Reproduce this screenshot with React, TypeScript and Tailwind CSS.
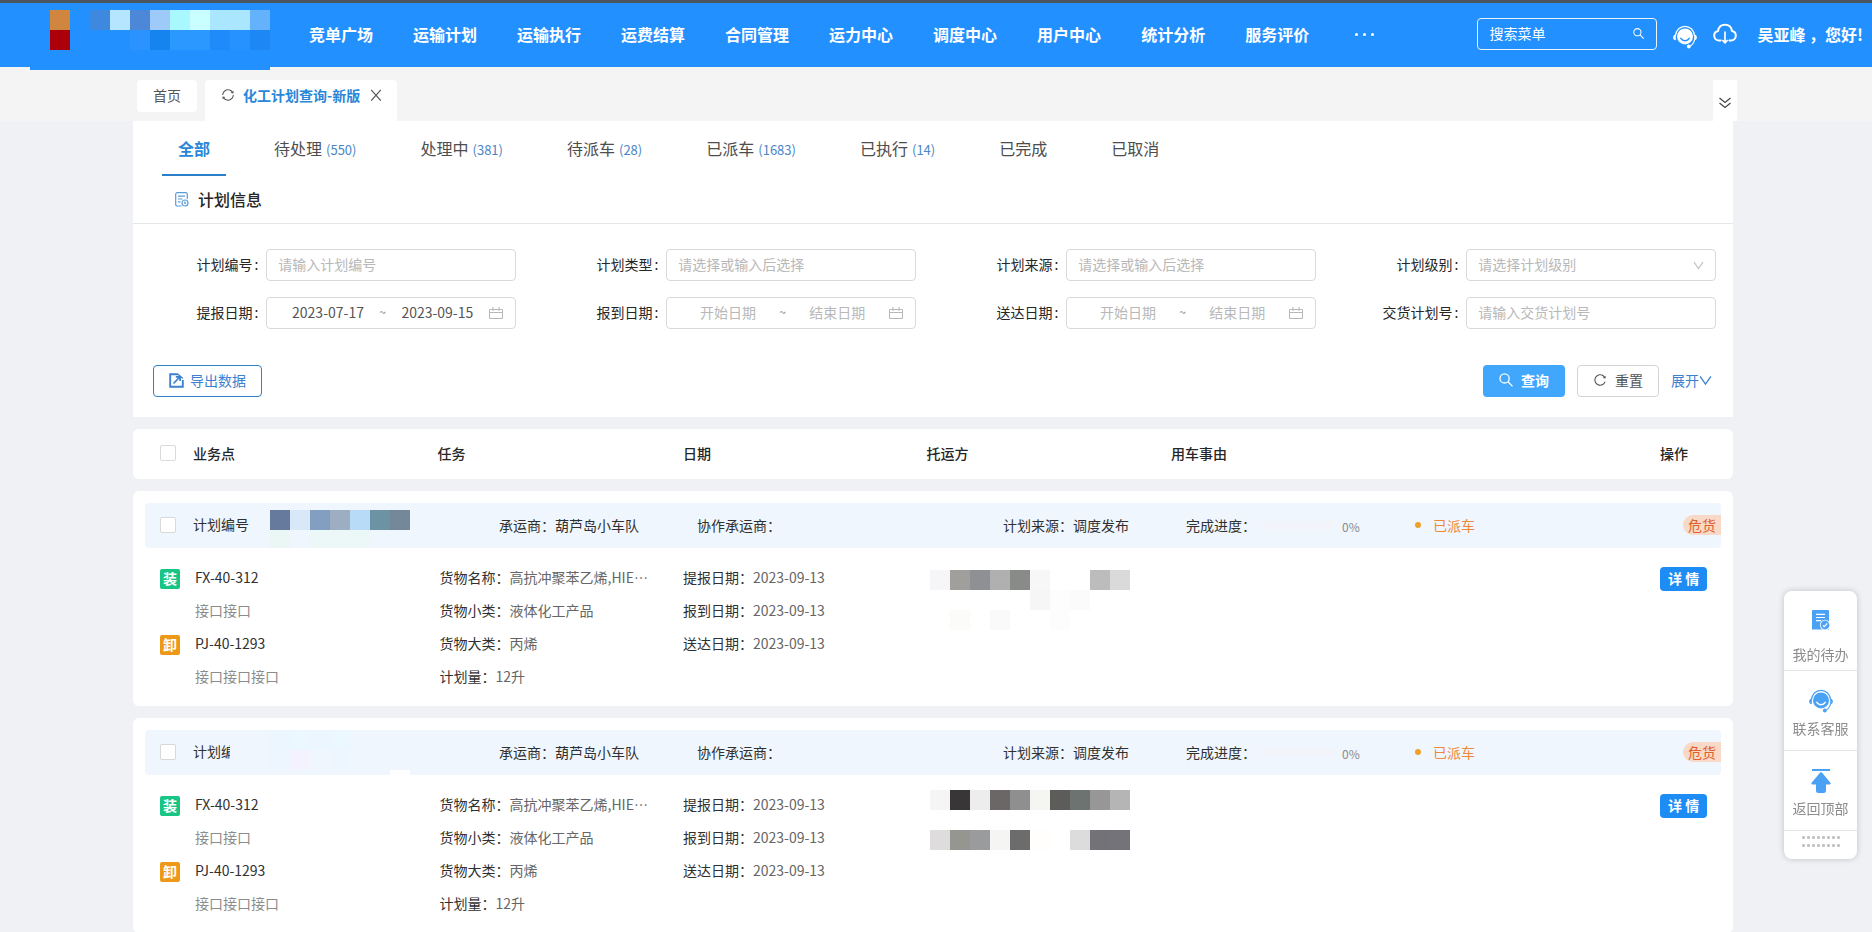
import React from "react";
import { AiOutlineReload, AiOutlineSync } from "react-icons/ai";

type Cell = [col: number, row: number, color: string];

const CELL = 20;

function Mosaic({ cells, width, height, className = "" }: { cells: Cell[]; width: number; height: number; className?: string }) {
  return (
    <svg
      width={width}
      height={height}
      viewBox={`0 0 ${width} ${height}`}
      shapeRendering="crispEdges"
      aria-hidden="true"
      className={`block shrink-0 ${className}`}
    >
      {cells.map(([col, row, color]) => (
        <rect key={`${col}-${row}`} x={col * CELL} y={row * CELL} width={CELL} height={CELL} fill={color} />
      ))}
    </svg>
  );
}

function HeadsetIcon({ size, smile }: { size: number; smile: string }) {
  return (
    <svg width={size} height={size} viewBox="0 0 24 24" fill="none" aria-hidden="true">
      <path d="M2.400 11C2.800 5.200 6.800 1.300 12 1.300s9.200 3.900 9.600 9.700" stroke="currentColor" strokeWidth="1.200" />
      <path d="M2.800 9.500v5.800C1.200 15.100.1 14 .1 12.400s1.100-2.700 2.700-2.900ZM21.200 9.500v5.800c1.600-.2 2.700-1.300 2.700-2.900s-1.100-2.700-2.700-2.900Z" fill="currentColor" />
      <circle cx="12" cy="11.400" r="8" fill="currentColor" />
      <path d="M7.800 13.400c2 3 6.400 3 8.400 0" stroke={smile} strokeWidth="1.500" strokeLinecap="round" />
      <path d="M21.600 14.500c-.6 3.400-2.600 5.800-5.400 7" stroke="currentColor" strokeWidth="1.200" />
      <circle cx="15.800" cy="21.500" r="1.900" fill="currentColor" />
    </svg>
  );
}

function CloudIcon() {
  return (
    <svg width="24" height="22" viewBox="0 0 24 22" fill="none" stroke="currentColor" strokeWidth="2" strokeLinecap="round" strokeLinejoin="round" aria-hidden="true">
      <path d="M7.600 17.500H5.800A4.800 4.800 0 0 1 1.200 12.800c0-2.600 1.700-4.300 3.800-4.700C5.600 4.300 8.400 1.800 12 1.800s6.400 2.500 7 6.300c2.100.4 3.800 2.100 3.800 4.700a4.800 4.800 0 0 1-4.600 4.700h-1.800" />
      <path d="M12 9v10.500M9.800 17.500l2.200 2.300 2.200-2.300" strokeWidth="1.700" />
    </svg>
  );
}

function SearchIcon({ size }: { size: number }) {
  return (
    <svg width={size} height={size} viewBox="0 0 14 14" fill="none" stroke="currentColor" strokeWidth="1.300" aria-hidden="true">
      <circle cx="5.600" cy="5.400" r="4.600" />
      <path d="m9 8.800 4.500 4.600" />
    </svg>
  );
}

function CloseIcon() {
  return (
    <svg width="14" height="14" viewBox="0 0 14 14" fill="none" stroke="currentColor" strokeWidth="1.200" aria-hidden="true">
      <path d="m2.200 1.800 9.600 10.800M11.800 1.800 2.200 12.600" />
    </svg>
  );
}

function ChevronIcon({ size }: { size: number }) {
  return (
    <svg width={size} height={size} viewBox="0 0 12 12" fill="none" stroke="currentColor" strokeWidth="1.200" aria-hidden="true">
      <path d="M1 2.200 6 9.400l5-7.200" />
    </svg>
  );
}

function CalendarIcon() {
  return (
    <svg width="14" height="14" viewBox="0 0 14 14" fill="none" stroke="currentColor" className="shrink-0" aria-hidden="true">
      <path d="M.5 3.500v9h13v-9ZM.5 6.500h13M4 1v4M10 1v4" />
    </svg>
  );
}

function DoubleDownIcon() {
  return (
    <svg width="12" height="12" viewBox="0 0 12 12" fill="none" stroke="currentColor" strokeWidth="1.200" aria-hidden="true">
      <path d="M.5 1 6 5.500 11.500 1M.5 6 6 10.500 11.500 6" />
    </svg>
  );
}

function PlanIcon() {
  return (
    <svg width="14" height="15" viewBox="0 0 14 15" fill="none" stroke="currentColor" strokeWidth="1.200" aria-hidden="true">
      <path d="M6.500 14H2.200A1.500 1.500 0 0 1 .7 12.500V2.200A1.500 1.500 0 0 1 2.200.7h8.600a1.500 1.500 0 0 1 1.500 1.500V7" />
      <path d="M3 4.200h7M3 7h4.500M3 9.800h2.500" />
      <circle cx="10" cy="11" r="3" />
      <path d="M9.800 9.500v1.700l1.300.3" />
    </svg>
  );
}

function ExportIcon() {
  return (
    <svg width="15" height="15" viewBox="0 0 15 15" fill="none" stroke="currentColor" strokeWidth="1.900" aria-hidden="true">
      <path d="M9 1.200H1.200v12.600h12.600V7" />
      <path d="M4.500 10.500 10.800 4M6.800 3.800h4.300v4.300" strokeWidth="1.700" />
      <path d="m9 1.200 4.800 4.300" strokeWidth="1.300" />
    </svg>
  );
}

function TodoIcon() {
  return (
    <svg width="18" height="20" viewBox="0 0 18 20" fill="none" aria-hidden="true">
      <path d="M1 0h15a1 1 0 0 1 1 1v18.500H0V1a1 1 0 0 1 1-1Z" fill="currentColor" />
      <path d="M4 4.300h9M4 7.500h9M4 10.700h5" stroke="#fff" strokeWidth="1.200" />
      <circle cx="13" cy="15" r="5.200" fill="#fff" />
      <circle cx="13" cy="15" r="4.400" fill="currentColor" />
      <path d="m10.900 15.400 1.500 1.300 2.900-3.300" stroke="#fff" strokeWidth="1.300" />
    </svg>
  );
}

function TopIcon() {
  return (
    <svg width="20" height="24" viewBox="0 0 20 24" fill="currentColor" aria-hidden="true">
      <path d="M1 0h18v2H1zM9.200 3.600a1.200 1.200 0 0 1 1.700 0l8.500 10.200c.6.800.2 1.600-.7 1.600H15v6.300A2.200 2.200 0 0 1 12.800 24H7.200A2.200 2.200 0 0 1 5 21.700v-6.300H1.300c-.9 0-1.300-.8-.7-1.600Z" />
    </svg>
  );
}

function DragDots() {
  return (
    <svg width="38" height="11" viewBox="0 0 38 11" fill="#c3c3c3" aria-hidden="true">
      {[0, 5, 10, 15, 20, 25, 30, 35].map((x) => (
        <g key={x}>
          <rect x={x} y="0" width="3" height="3" rx="1" />
          <rect x={x} y="8" width="3" height="3" rx="1" />
        </g>
      ))}
    </svg>
  );
}

const LOGO_CELLS: Cell[] = [
  [1, 0, "#d0863f"], [1, 1, "#ab000a"],
  [3, 0, "#3f88df"], [4, 0, "#b5e5ff"], [5, 0, "#4c88d7"], [6, 0, "#9dcaf8"], [7, 0, "#a9f8ff"],
  [8, 0, "#caffff"], [9, 0, "#aae7ff"], [10, 0, "#aae7ff"], [11, 0, "#64b2fb"],
  [5, 1, "#2a93ff"], [6, 1, "#1684ee"], [7, 1, "#2b98ff"], [8, 1, "#2b98ff"], [9, 1, "#1f8bfa"],
  [10, 1, "#2592ff"], [11, 1, "#1d88f3"],
];

const NAV = ["竞单广场", "运输计划", "运输执行", "运费结算", "合同管理", "运力中心", "调度中心", "用户中心", "统计分析", "服务评价"];

function Header() {
  return (
    <header className="relative z-10 flex h-[67px] shrink-0 items-start border-t-[3px] border-[#4a5560] bg-[#2290ff] text-white">
      <a href="#" aria-label="首页" className="ml-[30px] block h-[67px] bg-[#2290ff] pt-[7px]">
        <Mosaic cells={LOGO_CELLS} width={240} height={60} />
      </a>
      <nav className="ml-[39px] flex h-[62px] items-center gap-10 text-base font-bold whitespace-nowrap">
        {NAV.map((name) => (
          <a key={name} href="#">{name}</a>
        ))}
        <button type="button" aria-label="更多" className="ml-[6px] flex gap-[5px]">
          <span className="size-[3px] rounded-full bg-white" />
          <span className="size-[3px] rounded-full bg-white" />
          <span className="size-[3px] rounded-full bg-white" />
        </button>
      </nav>
      <div className="ml-auto flex h-[62px] items-center pr-[9px]">
        <label className="flex h-8 w-[180px] items-center rounded border border-white/90 pr-3 pb-[2px] pl-[11px]">
          <input type="text" aria-label="搜索菜单" placeholder="搜索菜单" className="min-w-0 flex-1 bg-transparent text-sm outline-none placeholder:text-white" />
          <SearchIcon size={11} />
        </label>
        <button type="button" aria-label="客服" className="ml-4 pt-[6px]"><HeadsetIcon size={24} smile="#2290ff" /></button>
        <button type="button" aria-label="下载" className="ml-4"><CloudIcon /></button>
        <span className="ml-5 text-base font-bold whitespace-nowrap">吴亚峰 ，您好!</span>
      </div>
    </header>
  );
}

function PageTabs() {
  return (
    <div className="flex h-[54px] shrink-0 items-start bg-[#f4f4f5] px-[135px] pt-[13px] text-sm text-[#555]">
      <a href="#" className="ml-[2px] flex h-8 items-center rounded bg-white px-4 pb-[2px]">首页</a>
      <div className="ml-2 flex h-[41px] items-start rounded-t bg-white pr-[14px] pl-4">
        <div className="flex h-[30px] items-center">
          <AiOutlineSync className="size-[14px]" />
          <a href="#" className="ml-2 font-bold text-[#2a87d8]">化工计划查询-新版</a>
          <button type="button" aria-label="关闭" className="ml-[9px]"><CloseIcon /></button>
        </div>
      </div>
      <button type="button" aria-label="展开标签" className="ml-auto flex h-[41px] w-6 items-center justify-center bg-white pt-1 text-[#444]">
        <DoubleDownIcon />
      </button>
    </div>
  );
}

const STATUS: { name: string; count?: number }[] = [
  { name: "全部" },
  { name: "待处理", count: 550 },
  { name: "处理中", count: 381 },
  { name: "待派车", count: 28 },
  { name: "已派车", count: 1683 },
  { name: "已执行", count: 14 },
  { name: "已完成" },
  { name: "已取消" },
];

function StatusTabs() {
  return (
    <div role="tablist" className="flex h-[55px] gap-8 pl-[29px] text-base text-[#4d4d4d]">
      {STATUS.map(({ name, count }, i) => (
        <button
          key={name}
          type="button"
          role="tab"
          aria-selected={i === 0}
          className={
            i === 0
              ? "border-b-2 border-[#2a7fc9] px-4 font-bold text-[#2a87d8]"
              : "border-b-2 border-transparent px-4 whitespace-nowrap"
          }
        >
          {name}
          {count !== undefined && <span className="ml-1 text-[13px] text-[#4a86c5]">({count})</span>}
        </button>
      ))}
    </div>
  );
}

const BOX = "h-8 w-full rounded border border-[#d9d9d9] bg-white px-[11px] pb-[2px] text-sm outline-none placeholder:text-[#b8b8b8]";

function Field({ id, label, children }: { id: string; label: string; children: React.ReactNode }) {
  return (
    <div className="flex items-center">
      <label htmlFor={id} className="w-1/3 pr-2 pb-[2px] text-right text-sm whitespace-nowrap text-[#262626]">
        {label}
        <span className="ml-[2px]">:</span>
      </label>
      <div className="mr-[17px] min-w-0 flex-1">{children}</div>
    </div>
  );
}

function TextField({ id, label, placeholder }: { id: string; label: string; placeholder: string }) {
  return (
    <Field id={id} label={label}>
      <input id={id} type="text" placeholder={placeholder} className={BOX} />
    </Field>
  );
}

const RANGE_INPUT = "w-0 flex-1 pb-[2px] text-center outline-none placeholder:text-[#b8b8b8]";

function RangeField({ id, label, from, to }: { id: string; label: string; from?: string; to?: string }) {
  return (
    <Field id={id} label={label}>
      <div className="flex h-8 items-center rounded border border-[#d9d9d9] bg-white pr-3 pl-[11px] text-sm text-[#555]">
        <input id={id} type="text" defaultValue={from} placeholder="开始日期" className={RANGE_INPUT} />
        <span className="w-[10px] pb-[2px] text-center text-xs text-[#888]">~</span>
        <input type="text" aria-label={`${label}结束`} defaultValue={to} placeholder="结束日期" className={RANGE_INPUT} />
        <span className="ml-[2px] text-[#b8b8b8]"><CalendarIcon /></span>
      </div>
    </Field>
  );
}

function SearchPanel() {
  return (
    <section className="bg-white pb-5">
      <StatusTabs />
      <div className="flex h-12 items-center border-b border-[#e6e7ea] pl-[42px]">
        <span className="text-[#5a9bd8]"><PlanIcon /></span>
        <h2 className="ml-[9px] pb-[2px] text-base font-medium text-[#262626]">计划信息</h2>
      </div>
      <form onSubmit={(e) => e.preventDefault()}>
        <div className="grid grid-cols-4 gap-y-4 pt-[25px]">
          <TextField id="plan-no" label="计划编号" placeholder="请输入计划编号" />
          <TextField id="plan-type" label="计划类型" placeholder="请选择或输入后选择" />
          <TextField id="plan-source" label="计划来源" placeholder="请选择或输入后选择" />
          <Field id="plan-level" label="计划级别">
            <div className="relative">
              <select id="plan-level" defaultValue="" className={`${BOX} appearance-none text-[#b8b8b8]`}>
                <option value="">请选择计划级别</option>
              </select>
              <span className="pointer-events-none absolute top-[11px] right-3 text-[#bbb]"><ChevronIcon size={11} /></span>
            </div>
          </Field>
          <RangeField id="submit-date" label="提报日期" from="2023-07-17" to="2023-09-15" />
          <RangeField id="arrive-date" label="报到日期" />
          <RangeField id="deliver-date" label="送达日期" />
          <TextField id="delivery-no" label="交货计划号" placeholder="请输入交货计划号" />
        </div>
        <div className="mt-9 flex items-center pr-[21px] pl-5 text-sm">
          <button type="button" className="flex h-8 items-center gap-[6px] rounded border border-[#2f80c8] px-[15px] pb-[2px] text-[#3d80d0]">
            <ExportIcon />
            导出数据
          </button>
          <button type="submit" className="ml-auto flex h-8 items-center gap-2 rounded bg-[#40a7fd] px-4 pb-[2px] font-bold text-white">
            <SearchIcon size={14} />
            查询
          </button>
          <button type="reset" className="ml-3 flex h-8 items-center gap-2 rounded border border-[#d4d4d4] px-[15px] pb-[2px] text-[#555]">
            <AiOutlineReload className="size-[14px]" />
            重置
          </button>
          <a href="#" className="ml-3 flex items-center pb-[2px] text-[#3d80d0]">
            展开
            <ChevronIcon size={13} />
          </a>
        </div>
      </form>
    </section>
  );
}

interface Plan {
  id: string;
  title: string;
  titleClass: string;
  noCells: Cell[];
  noHeight: number;
  noClass: string;
  clientCells: Cell[];
  clientClass: string;
}

const PLANS: Plan[] = [
  {
    id: "1",
    title: "计划编号",
    titleClass: "w-14",
    noCells: [
      [0, 0, "#667a9d"], [1, 0, "#d8e8f8"], [2, 0, "#829fc2"], [3, 0, "#9dadc2"], [4, 0, "#b8dbf8"], [5, 0, "#6b93a3"], [6, 0, "#758899"],
      [0, 1, "#eaf7f4"], [2, 1, "#ecf7f7"], [3, 1, "#ecf7f7"], [4, 1, "#ecf7f7"],
    ],
    noHeight: 38,
    noClass: "mt-[7px]",
    clientCells: [
      [0, 0, "#f6f6f9"], [1, 0, "#a09f9b"], [2, 0, "#8f9093"], [3, 0, "#b0b0b0"], [4, 0, "#898b89"], [5, 0, "#f7f7f7"], [8, 0, "#bcbcbc"], [9, 0, "#dadada"],
      [5, 1, "#f6f6f6"], [6, 1, "#fdfdfd"], [7, 1, "#fbfbfb"],
      [1, 2, "#fbfbf9"], [3, 2, "#fafafa"], [6, 2, "#fdfdfd"],
    ],
    clientClass: "mt-[9px]",
  },
  {
    id: "2",
    title: "计划编号",
    titleClass: "w-[37px]",
    noCells: [
      [0, 0, "#ecf6fe"], [1, 0, "#ebf8ff"], [2, 0, "#ecf6fe"], [3, 0, "#ebf8ff"],
      [0, 1, "#edf6fe"], [1, 1, "#f4f2fe"], [3, 1, "#edf6ff"],
      [6, 2, "#ffffff"],
    ],
    noHeight: 45,
    noClass: "",
    clientCells: [
      [0, 0, "#f5f5f5"], [1, 0, "#383637"], [2, 0, "#ededed"], [3, 0, "#6a6766"], [4, 0, "#8f8f8f"], [5, 0, "#f5f5f2"], [6, 0, "#5c5c5a"], [7, 0, "#6c7371"], [8, 0, "#979797"], [9, 0, "#b5b5b5"],
      [0, 2, "#dfdcdd"], [1, 2, "#969690"], [2, 2, "#9a9b9c"], [3, 2, "#f5f5f4"], [4, 2, "#6c6c6c"], [5, 2, "#fffefc"], [7, 2, "#dcdcdc"], [8, 2, "#737276"], [9, 2, "#747379"],
    ],
    clientClass: "mt-[2px]",
  },
];

const CHECK = "block size-4 appearance-none rounded-xs border border-[#d9d9d9] bg-white";
const ROW = "grid grid-cols-[48px_1fr_1fr_1fr_1fr_2fr_61px]";

function Detail({ label, value }: { label: string; value: string }) {
  return (
    <div className="flex whitespace-nowrap">
      <span className="text-[#303030]">{label}：</span>
      <span className="text-[#666]">{value}</span>
    </div>
  );
}

function PlanCard({ plan }: { plan: Plan }) {
  return (
    <tbody className="mt-3 block rounded-md bg-white p-3 pb-[13px] text-sm text-[#303030]">
      <tr className="block">
        <td colSpan={7} className="grid h-[45px] grid-cols-[48px_306fr_198fr_306fr_183fr_229fr_306fr] items-center rounded bg-[#eff6fd] pb-[2px] whitespace-nowrap">
          <div className="pl-[15px]">
            <input type="checkbox" aria-label={`选择计划 ${plan.id}`} className={CHECK} />
          </div>
          <div className="flex h-[43px] items-start">
            <div className="w-[77px]">
              <div className={`overflow-hidden leading-[43px] ${plan.titleClass}`}>{plan.title}</div>
            </div>
            <Mosaic cells={plan.noCells} width={140} height={plan.noHeight} className={plan.noClass} />
          </div>
          <div>承运商：葫芦岛小车队</div>
          <div>协作承运商：</div>
          <div>计划来源：调度发布</div>
          <div className="flex items-center">
            完成进度：
            <div role="progressbar" aria-label="完成进度" aria-valuenow={0} className="ml-[6px] h-2 w-[72px] rounded-full bg-[#f3f4f9]" />
            <span className="ml-2 pt-1 text-xs text-[#8c8c8c]">0%</span>
          </div>
          <div className="flex items-center text-[#f0883a]">
            <span className="size-[6px] rounded-full bg-[#f0a028]" />
            <span className="ml-3">已派车</span>
            <span className="ml-auto h-5 rounded-l-full bg-[#f8d9c8] pr-[5px] pl-[5px] leading-5 text-[#e0602c]">危货</span>
          </div>
        </td>
      </tr>
      <tr className={`${ROW} pt-[13px] leading-[33px]`}>
        <td className="pt-px pl-[15px]">
          <div className="flex h-[33px] items-center">
            <span className="size-5 rounded-xs bg-[#17c684] text-center leading-[18px] font-bold text-white">装</span>
          </div>
          <div className="mt-[33px] flex h-[33px] items-center">
            <span className="size-5 rounded-xs bg-[#ee9818] text-center leading-[18px] font-bold text-white">卸</span>
          </div>
        </td>
        <td className="pl-[2px]">
          <div>FX-40-312</div>
          <div className="text-[#8c8c8c]">接口接口</div>
          <div>PJ-40-1293</div>
          <div className="text-[#8c8c8c]">接口接口接口</div>
        </td>
        <td className="min-w-0 pl-[2px]">
          <Detail label="货物名称" value="高抗冲聚苯乙烯,HIE…" />
          <Detail label="货物小类" value="液体化工产品" />
          <Detail label="货物大类" value="丙烯" />
          <Detail label="计划量" value="12升" />
        </td>
        <td className="pl-px">
          <Detail label="提报日期" value="2023-09-13" />
          <Detail label="报到日期" value="2023-09-13" />
          <Detail label="送达日期" value="2023-09-13" />
        </td>
        <td className="pl-[3px]">
          <Mosaic cells={plan.clientCells} width={200} height={60} className={plan.clientClass} />
        </td>
        <td />
        <td>
          <button type="button" className="mt-[6px] block h-6 rounded bg-[#1d8cf5] px-2 pb-[2px] leading-5 font-bold text-white">
            详 情
          </button>
        </td>
      </tr>
    </tbody>
  );
}

function PlanTable() {
  return (
    <table className="block">
      <thead className="mt-3 block rounded-md bg-white px-3 text-left text-sm text-[#262626]">
        <tr className={`${ROW} h-[50px] items-center pb-[2px]`}>
          <th className="pl-[15px]">
            <input type="checkbox" aria-label="全选" className={CHECK} />
          </th>
          <th className="font-medium">业务点</th>
          <th className="font-medium">任务</th>
          <th className="pl-px font-medium">日期</th>
          <th className="font-medium">托运方</th>
          <th className="font-medium">用车事由</th>
          <th className="font-medium">操作</th>
        </tr>
      </thead>
      {PLANS.map((plan) => (
        <PlanCard key={plan.id} plan={plan} />
      ))}
    </table>
  );
}

function SideTools() {
  const item = "flex h-20 w-full flex-col items-center border-b border-[#e4e4e4] text-sm text-[#8c8c8c]";
  return (
    <aside className="fixed right-[15px] bottom-[73px] w-[73px] rounded-lg bg-white shadow-[0_0_6px_rgba(0,0,0,0.2)]">
      <button type="button" className={item}>
        <span className="flex h-[39px] items-end text-[#4ba2f5]"><TodoIcon /></span>
        <span className="mt-auto mb-[6px]">我的待办</span>
      </button>
      <button type="button" className={item}>
        <span className="flex h-[42px] items-end text-[#4ba2f5]"><HeadsetIcon size={24} smile="#fff" /></span>
        <span className="mt-[5px]">联系客服</span>
      </button>
      <button type="button" className={item}>
        <span className="flex h-[42px] items-end text-[#4ba2f5]"><TopIcon /></span>
        <span className="mt-[5px]">返回顶部</span>
      </button>
      <div className="flex h-7 justify-center pt-[5px]"><DragDots /></div>
    </aside>
  );
}

export default function App() {
  return (
    <div lang="zh-CN" className="flex h-screen flex-col bg-[#eff1f5] font-['Noto_Sans_CJK_SC',sans-serif]">
      <Header />
      <div className="min-h-0 flex-1 overflow-y-auto [scrollbar-width:none]">
        <PageTabs />
        <main className="mr-[139px] ml-[133px]">
          <SearchPanel />
          <PlanTable />
        </main>
      </div>
      <SideTools />
    </div>
  );
}
